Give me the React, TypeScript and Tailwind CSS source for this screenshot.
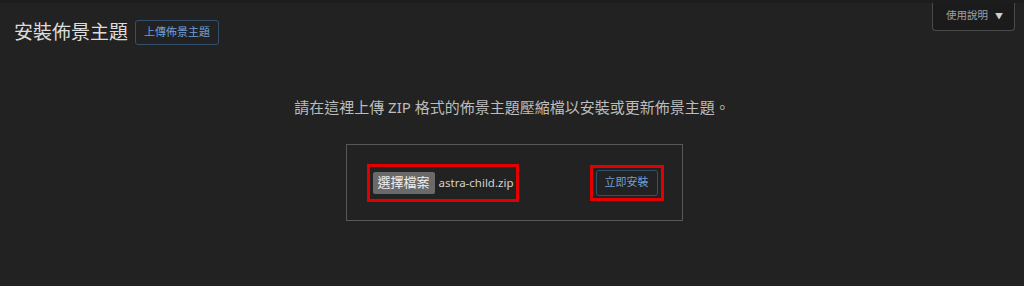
export default function App() {
  return (
    <div
      className="relative h-[286px] w-full overflow-hidden border-t-[3px] border-[#1c1d1f] bg-[#222222]"
      style={{ fontFamily: '"Noto Sans", "Noto Sans CJK TC", sans-serif' }}
    >
      {/* Help tab */}
      <button className="absolute right-[9px] top-[-3px] flex h-[31px] items-center gap-[7px] rounded-b-[4px] border border-t-0 border-[#4a4a4a] bg-[#1b1b1b] pl-[13px] pr-[11px] pt-[2px] text-[10.5px] text-[#a0a0a0]">
        使用說明
        <span className="text-[8px] text-[#cfcfcf]">▼</span>
      </button>

      {/* Header */}
      <div className="flex items-center gap-[7px] pl-[14px] pt-[16px]">
        <h1 className="text-[19px] leading-[26px] text-[#dcdcdc]">安裝佈景主題</h1>
        <button className="h-[25px] rounded-[3px] border border-[#34506f] px-[8px] text-[11px] text-[#6f9fd6]">
          上傳佈景主題
        </button>
      </div>

      {/* Description */}
      <p className="mt-[50px] text-center text-[15px] leading-[24px] text-[#bcbcbc]">
        請在這裡上傳 ZIP 格式的佈景主題壓縮檔以安裝或更新佈景主題。
      </p>

      {/* Upload form */}
      <div className="mt-[25px] flex justify-center pl-[4px]">
        <div className="flex h-[77px] w-[337px] items-center justify-between border border-[#575757] pl-[20px] pr-[18px]">
          <div className="flex h-[38px] items-center gap-[4px] border-[3px] border-[#e40000] pl-[3px] pr-[3px]">
            <span className="flex h-[22px] items-center rounded-[2px] bg-[#6a6a6a] px-[5px] text-[13px] text-[#f0f0f0]">
              選擇檔案
            </span>
            <span className="text-[11.5px] text-[#d2d2d2]">astra-child.zip</span>
          </div>
          <div className="flex h-[36px] items-center border-[3px] border-[#e40000] px-[3px]">
            <button className="h-[26px] rounded-[3px] border border-[#34506f] px-[8px] text-[11px] text-[#6f9fd6]">
              立即安裝
            </button>
          </div>
        </div>
      </div>
    </div>
  );
}
